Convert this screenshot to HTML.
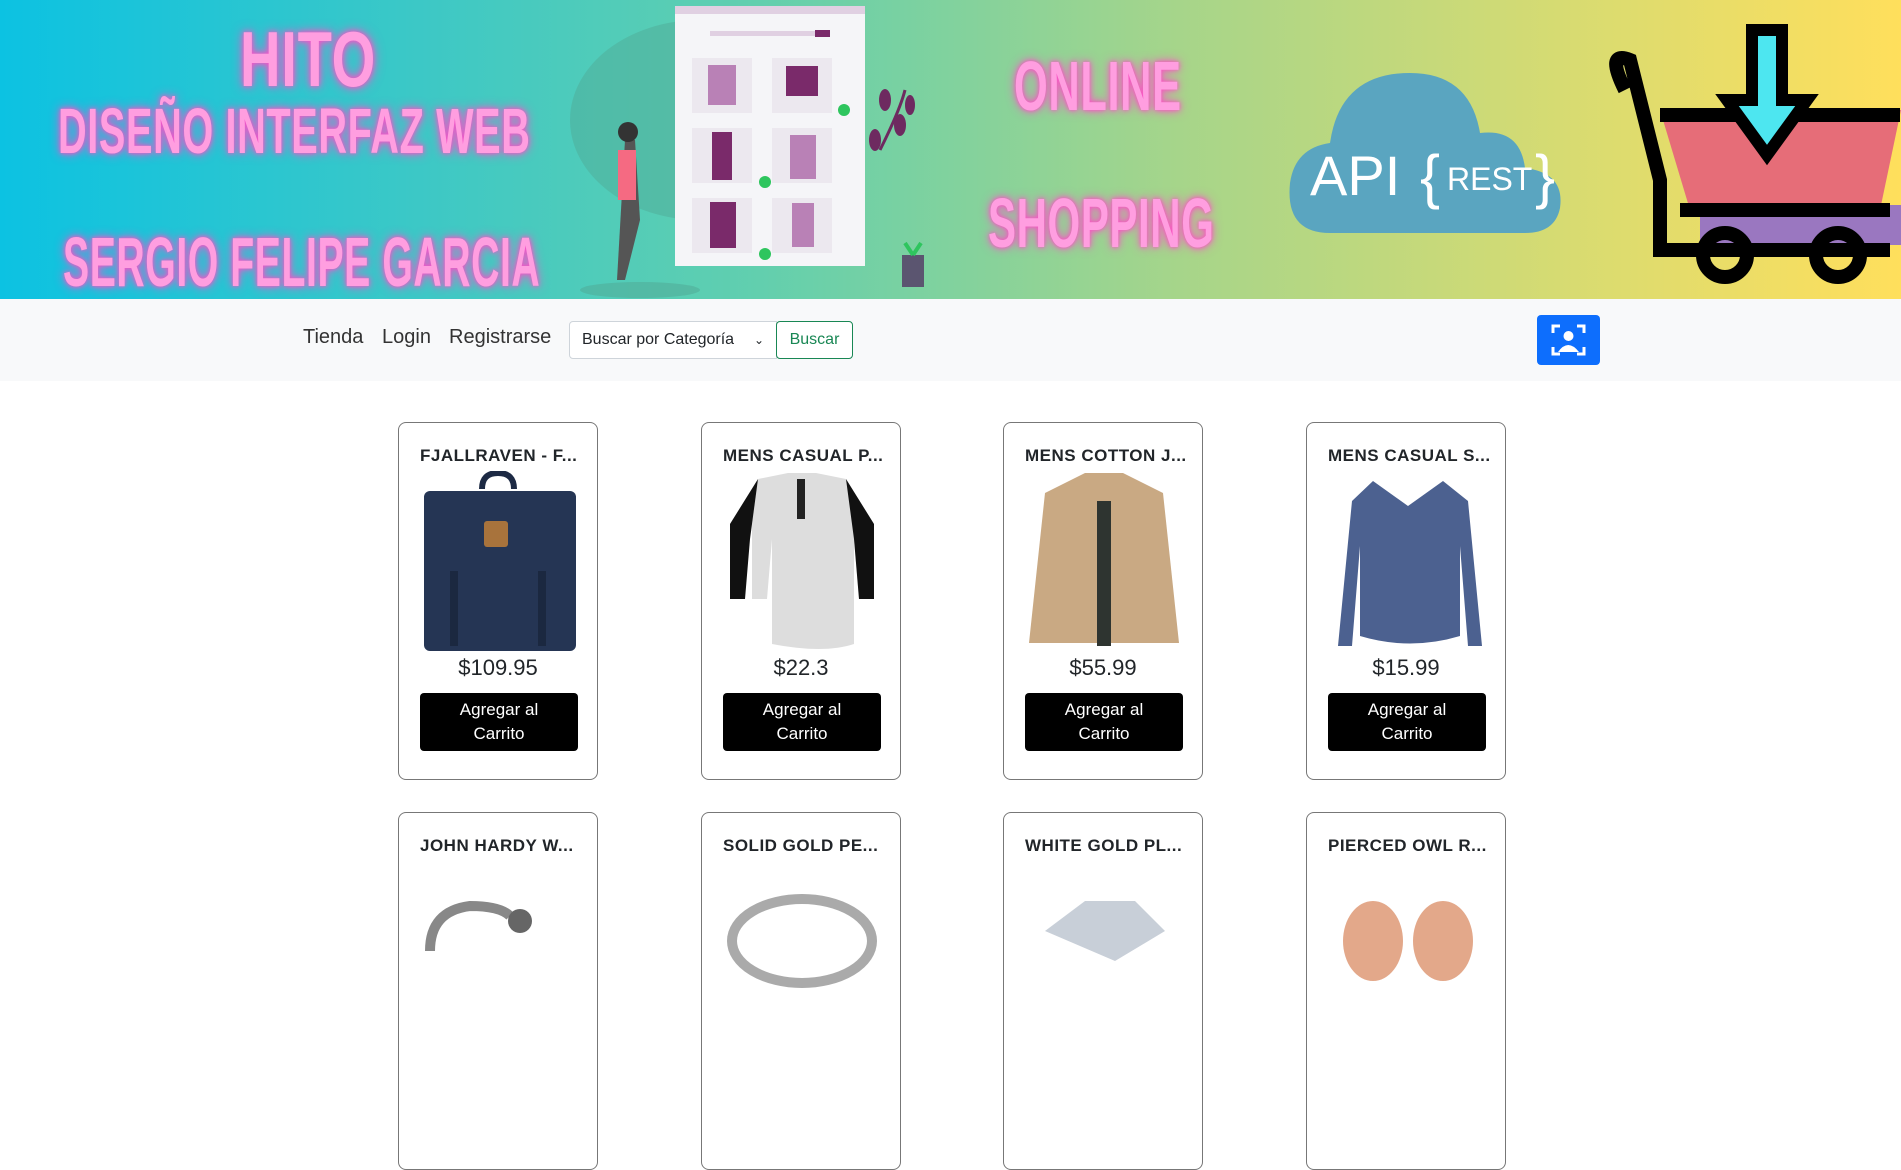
<!DOCTYPE html>
<html><head><meta charset="utf-8"><style>
*{box-sizing:border-box;margin:0;padding:0}
body{width:1901px;height:915px;overflow:hidden;background:#fff;font-family:"Liberation Sans","DejaVu Sans",sans-serif;position:relative}
.banner{position:absolute;left:0;top:0;width:1901px;height:299px;background:linear-gradient(90deg,#0cc2e2 0%,#3cc8c6 22%,#62cfae 40%,#a6d58a 62%,#d6db72 82%,#ffdf5c 100%);overflow:hidden}
.neon{position:absolute;color:#ff9ee0;font-weight:bold;text-shadow:0 0 6px #ff4fc8,0 0 14px #ff4fc8;transform-origin:left top;white-space:nowrap;letter-spacing:1px}
.nav{position:absolute;top:299px;left:0;width:1901px;height:82px;background:#f8f9fa}
.nav a{position:absolute;top:27px;font-size:20px;color:#333}
.sel{position:absolute;left:569px;top:321px;width:208px;height:38px;border:1px solid #ced4da;background:#fff;border-radius:4px 0 0 4px;font-size:16px;color:#212529;padding:9px 12px}
.btn{position:absolute;left:776px;top:321px;width:77px;height:38px;border:1px solid #198754;border-radius:4px;font-size:16px;color:#198754;text-align:center;line-height:36px;background:#fff}
.card{position:absolute;width:200px;height:358px;border:1px solid #777;border-radius:8px;background:#fff}
.card .t{position:absolute;left:21px;top:23px;font-size:17px;font-weight:600;color:#212529;letter-spacing:.5px}
.card .im{position:absolute;left:21px;top:48px;width:158px;height:180px}
.card .p{position:absolute;left:0;width:100%;top:232px;text-align:center;font-size:22px;color:#212529}
.card .b{position:absolute;left:21px;top:270px;width:158px;height:58px;background:#000;color:#fff;border-radius:4px;text-align:center;font-size:17px;line-height:24px;padding-top:5px}
</style></head><body>
<div class="banner">
 <div class="neon" style="left:240px;top:14px;font-size:78px;transform:scaleX(.72)">HITO</div>
 <div class="neon" style="left:58px;top:94px;font-size:64px;transform:scaleX(.62)">DISEÑO INTERFAZ WEB</div>
 <div class="neon" style="left:63px;top:222px;font-size:70px;transform:scaleX(.56)">SERGIO FELIPE GARCIA</div>
 <div class="neon" style="left:1014px;top:46px;font-size:70px;transform:scaleX(.62)">ONLINE</div>
 <div class="neon" style="left:988px;top:183px;font-size:70px;transform:scaleX(.6)">SHOPPING</div>
 <svg width="1901" height="299" style="position:absolute;left:0;top:0">
  <ellipse cx="700" cy="120" rx="130" ry="100" fill="#4fa894" opacity=".45"/>
  <ellipse cx="640" cy="290" rx="60" ry="8" fill="#4fa894" opacity=".5"/>
  <rect x="675" y="6" width="190" height="260" fill="#f5f5f8"/>
  <rect x="675" y="6" width="190" height="8" fill="#e0d0e2"/>
  <rect x="710" y="31" width="120" height="5" fill="#e0d0e2"/><rect x="815" y="30" width="15" height="7" fill="#7a2a6a"/>
  <g fill="#ece8ef"><rect x="692" y="58" width="60" height="55"/><rect x="772" y="58" width="60" height="55"/><rect x="692" y="128" width="60" height="55"/><rect x="772" y="128" width="60" height="55"/><rect x="692" y="198" width="60" height="55"/><rect x="772" y="198" width="60" height="55"/></g>
  <g fill="#b981b6"><rect x="708" y="65" width="28" height="40"/><rect x="790" y="135" width="26" height="44"/><rect x="792" y="203" width="22" height="44"/></g>
  <g fill="#7a2a6a"><rect x="786" y="66" width="32" height="30"/><rect x="712" y="132" width="20" height="48"/><rect x="710" y="202" width="26" height="46"/></g>
  <g fill="#2ec55e"><circle cx="844" cy="110" r="6"/><circle cx="765" cy="182" r="6"/><circle cx="765" cy="254" r="6"/></g>
  <path d="M880 150 q20 -40 25 -60" stroke="#6e2a60" stroke-width="3" fill="none"/>
  <g fill="#6e2a60"><ellipse cx="885" cy="100" rx="6" ry="11"/><ellipse cx="900" cy="125" rx="6" ry="11"/><ellipse cx="875" cy="140" rx="6" ry="11"/><ellipse cx="910" cy="105" rx="5" ry="10"/></g>
  <rect x="902" y="255" width="22" height="32" fill="#5b5570"/><path d="M913 255 l-8 -12 M913 255 l8 -12" stroke="#2ec55e" stroke-width="4"/>
  <path d="M625 140 l10 0 l5 80 l-15 60 l-8 0z" fill="#555"/><rect x="618" y="150" width="18" height="50" fill="#f56a82"/><circle cx="628" cy="132" r="10" fill="#333"/>
  <path d="M1330 233 q-45 0 -40 -50 q5 -35 40 -40 q10 -70 80 -70 q60 0 70 60 q40 -5 45 35 q40 5 35 40 q-5 25 -35 25z" fill="#5aa5c0"/>
  <text x="1310" y="195" font-size="56" fill="#fff" font-family="Liberation Sans">API</text>
  <text x="1420" y="197" font-size="60" fill="#fff" font-family="Liberation Sans">{</text>
  <text x="1447" y="190" font-size="32" fill="#fff" font-family="Liberation Sans">REST</text>
  <text x="1535" y="197" font-size="60" fill="#fff" font-family="Liberation Sans">}</text>
  <polygon points="1660,110 1901,110 1880,210 1690,210" fill="#e66d78"/>
  <rect x="1700" y="205" width="201" height="40" fill="#9a77c0"/>
  <path d="M1625 90 q-20 -40 5 -30 l30 120 l0 70 l230 0 M1660 115 l240 0 M1680 210 l210 0" stroke="#000" stroke-width="14" fill="none"/>
  <circle cx="1725" cy="255" r="22" stroke="#000" stroke-width="14" fill="none"/><circle cx="1838" cy="255" r="22" stroke="#000" stroke-width="14" fill="none"/>
  <path d="M1752 30 l30 0 l0 70 l25 0 l-40 55 l-40 -55 l25 0z" fill="#4de6f0" stroke="#000" stroke-width="12"/>
 </svg>
</div>
<div class="nav">
 <a style="left:303px">Tienda</a><a style="left:382px">Login</a><a style="left:449px">Registrarse</a>
</div>
<div class="sel">Buscar por Categoría <span style="position:absolute;right:12px;font-size:12px;top:11px">&#8964;</span></div>
<div class="btn">Buscar</div>
<div style="position:absolute;left:1537px;top:315px;width:63px;height:50px;background:#0d6efd;border-radius:4px">
 <svg width="63" height="50"><g stroke="#fff" stroke-width="3" fill="none"><path d="M16 18 v-7 h7 M40 11 h7 v7 M16 32 v7 h7 M40 39 h7 v-7"/></g><circle cx="31.5" cy="21" r="5" fill="#fff"/><path d="M21 37 q10 -14 21 0z" fill="#fff"/></svg>
</div>

<div class="card" style="left:398px;top:422px"><div class="t">FJALLRAVEN - F...</div>
<svg class="im" viewBox="0 0 158 180"><path d="M62 18 q0 -16 16 -16 q16 0 16 16" stroke="#1d2a44" stroke-width="6" fill="none"/><rect x="4" y="20" width="152" height="160" rx="6" fill="#253554"/><rect x="64" y="50" width="24" height="26" rx="3" fill="#a8733c"/><rect x="30" y="100" width="8" height="75" fill="#1b2840"/><rect x="118" y="100" width="8" height="75" fill="#1b2840"/></svg>
<div class="p">$109.95</div><div class="b">Agregar al<br>Carrito</div></div>

<div class="card" style="left:701px;top:422px"><div class="t">MENS CASUAL P...</div>
<svg class="im" viewBox="0 0 158 180"><path d="M35 8 l30 -6 l28 0 l30 6 l28 45 l0 75 l-15 0 l-5 -60 l0 105 q-30 10 -82 0 l0 -105 l-5 60 l-15 0 l0 -75z" fill="#ddd"/><path d="M35 8 l-28 45 l0 75 l15 0 l5 -60z M123 8 l28 45 l0 75 l-15 0 l-5 -60z" fill="#111"/><rect x="74" y="8" width="8" height="40" fill="#222"/></svg>
<div class="p">$22.3</div><div class="b">Agregar al<br>Carrito</div></div>

<div class="card" style="left:1003px;top:422px"><div class="t">MENS COTTON J...</div>
<svg class="im" viewBox="0 0 158 180"><path d="M60 2 l38 0 l40 20 l16 150 l-150 0 l16 -150z" fill="#c9a983"/><rect x="72" y="30" width="14" height="145" fill="#2e3430"/></svg>
<div class="p">$55.99</div><div class="b">Agregar al<br>Carrito</div></div>

<div class="card" style="left:1306px;top:422px"><div class="t">MENS CASUAL S...</div>
<svg class="im" viewBox="0 0 158 180"><path d="M45 10 l35 25 l35 -25 l25 20 l14 145 l-14 0 l-8 -100 l0 90 q-50 15 -100 0 l0 -90 l-8 100 l-14 0 l14 -145z" fill="#4c6190"/></svg>
<div class="p">$15.99</div><div class="b">Agregar al<br>Carrito</div></div>

<div class="card" style="left:398px;top:812px"><div class="t">JOHN HARDY W...</div>
<svg class="im" viewBox="0 0 158 180"><path d="M10 90 q0 -40 40 -45 q30 0 40 10" stroke="#888" stroke-width="10" fill="none"/><circle cx="100" cy="60" r="12" fill="#666"/></svg></div>
<div class="card" style="left:701px;top:812px"><div class="t">SOLID GOLD PE...</div>
<svg class="im" viewBox="0 0 158 180"><ellipse cx="79" cy="80" rx="70" ry="42" stroke="#aaa" stroke-width="10" fill="none"/></svg></div>
<div class="card" style="left:1003px;top:812px"><div class="t">WHITE GOLD PL...</div>
<svg class="im" viewBox="0 0 158 180"><path d="M20 70 l40 -30 l50 0 l30 30 l-50 30z" fill="#c8cfd8"/></svg></div>
<div class="card" style="left:1306px;top:812px"><div class="t">PIERCED OWL R...</div>
<svg class="im" viewBox="0 0 158 180"><ellipse cx="45" cy="80" rx="30" ry="40" fill="#e3a88a"/><ellipse cx="115" cy="80" rx="30" ry="40" fill="#e3a88a"/></svg></div>
</body></html>
